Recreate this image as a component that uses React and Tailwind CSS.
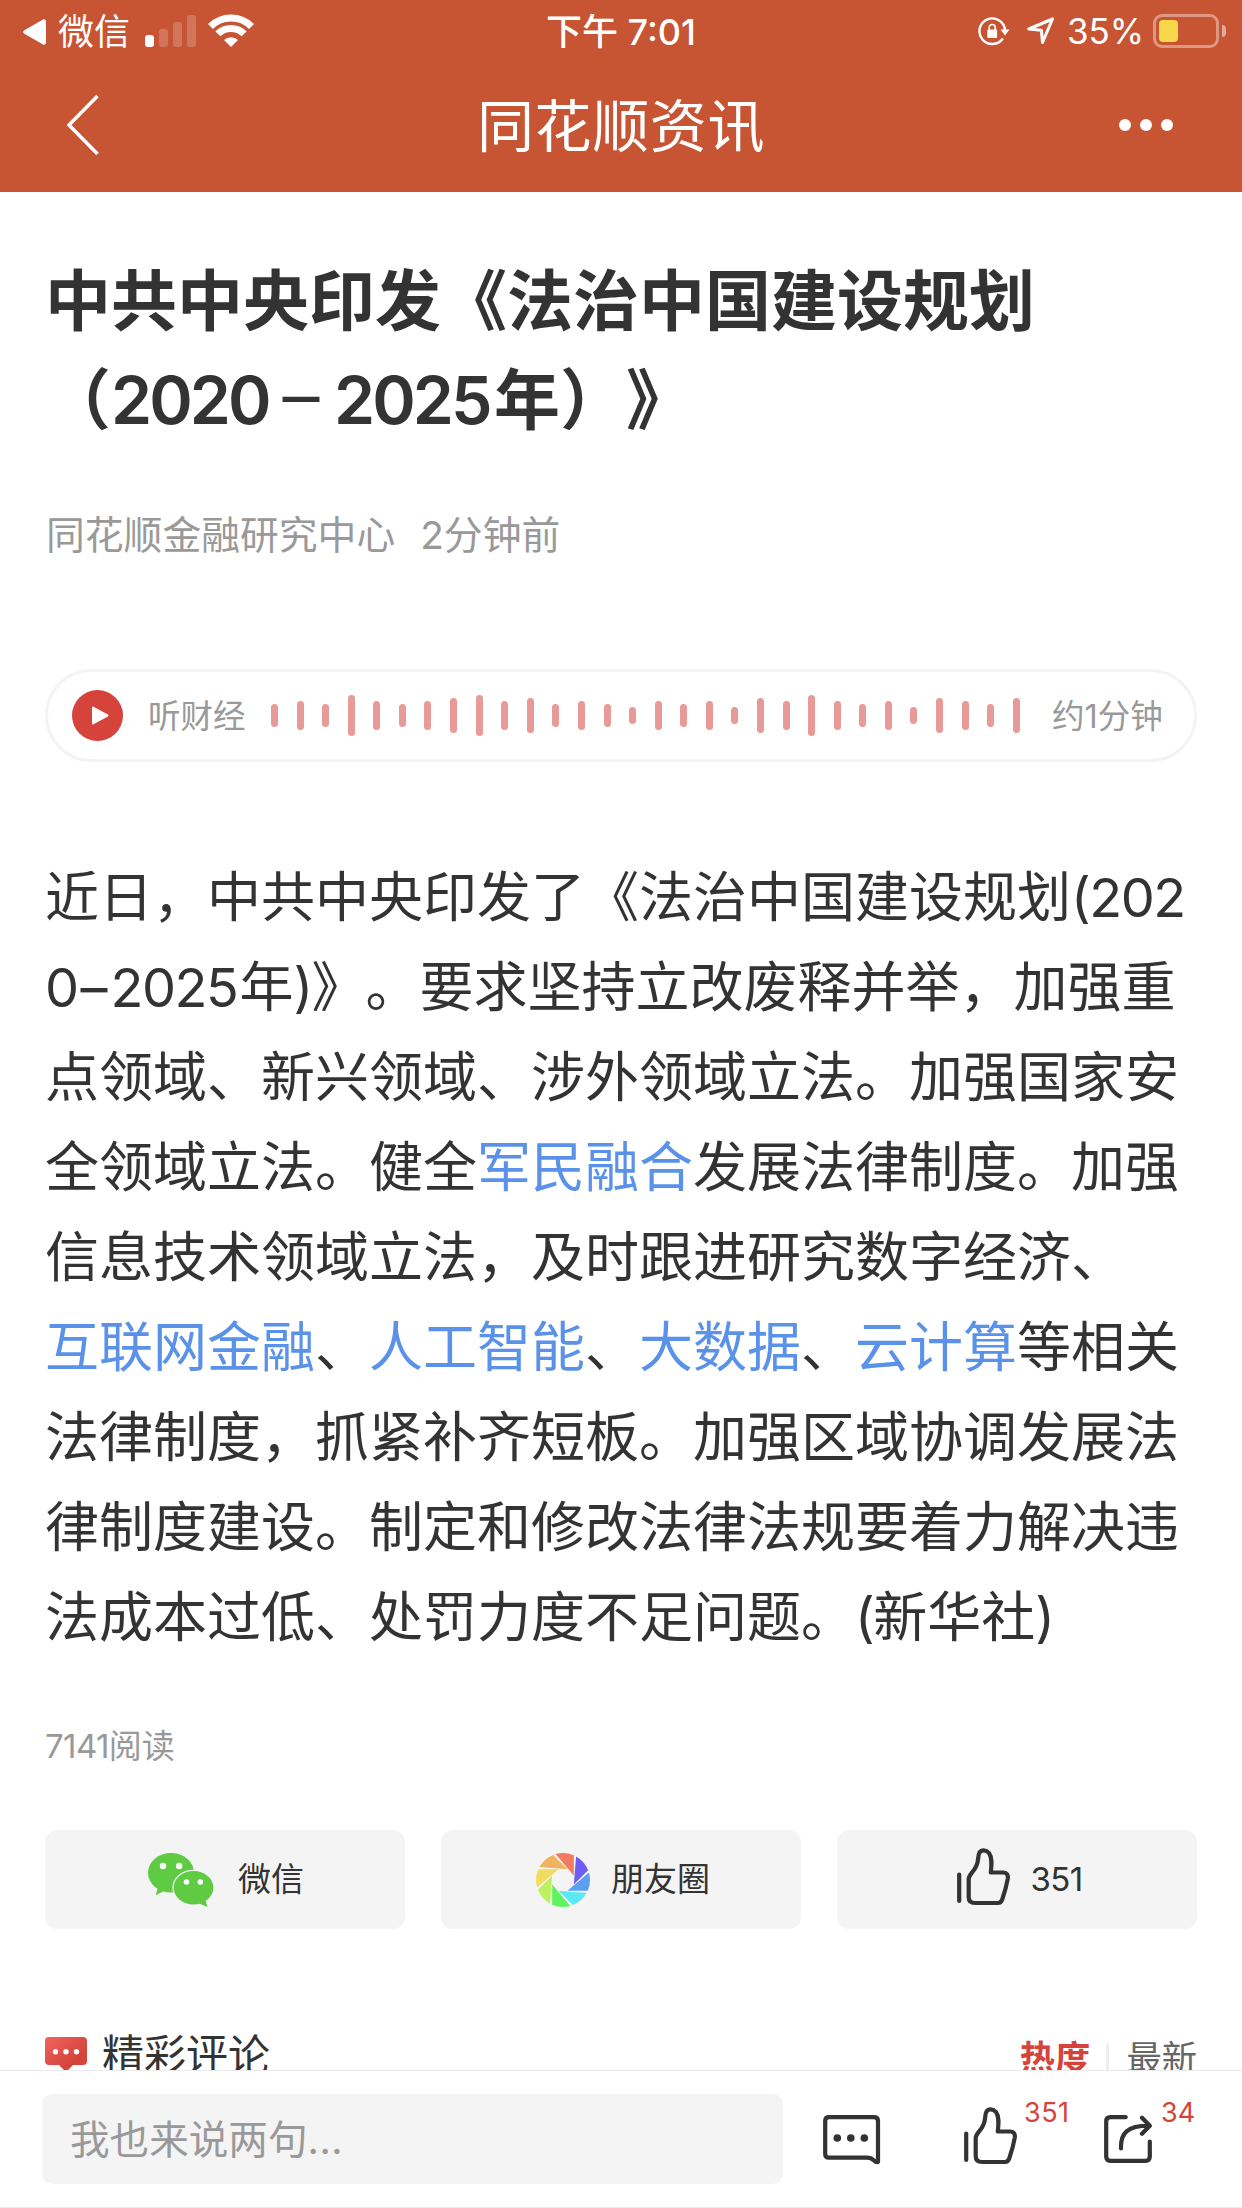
const BARS = [
  23, 29, 23, 41, 29, 23, 29, 35, 41, 29, 35, 23, 29, 23, 17,
  29, 23, 29, 17, 35, 29, 41, 29, 23, 29, 17, 35, 29, 23, 35,
];

const BLADES = [
  "#f27a5e", "#6f5df2", "#5b9ff2", "#5ce8f2",
  "#60f25f", "#bcf25d", "#f0dc5e", "#f0b45e",
];

function StatusBar() {
  return (
    <div className="grid h-[62px] grid-cols-[1fr_auto_1fr] items-center text-[36px] leading-[62px]">
      <div className="flex items-center pl-[23px]">
        <svg className="h-[26px] w-[23px]" viewBox="0 0 23 26" fill="currentColor">
          <path d="M1 11.5 20 .6Q23 -.5 23 3v20q0 3.500-3 2.400L1 14.500Q-.6 13 1 11.500Z" />
        </svg>
        <span className="ml-[12px] pt-px">微信</span>
        <div className="ml-[15px] flex items-end gap-[5px] pb-[2px]">
          <i className="h-[12px] w-[9px] rounded-[3px] bg-white" />
          <i className="h-[18px] w-[9px] rounded-[3px] bg-white/20" />
          <i className="h-[25px] w-[9px] rounded-[3px] bg-white/20" />
          <i className="h-[32px] w-[9px] rounded-[3px] bg-white/20" />
        </div>
        <svg className="-mt-[3px] ml-[12px] h-[33px] w-[46px]" viewBox="0 0 46 33" fill="none" stroke="currentColor">
          <path d="M2.500 12.500A29 29 0 0 1 43.500 12.500" strokeWidth="7" />
          <path d="M9.900 19.900A18.500 18.500 0 0 1 36.100 19.900" strokeWidth="7" />
          <path d="M23 33 16 26A10 10 0 0 1 30 26Z" fill="currentColor" stroke="none" />
        </svg>
      </div>
      <div className="text-[36px] font-medium">下午 7:01</div>
      <div className="flex items-center justify-end pr-[16px] pb-px">
        <svg className="h-[29px] w-[32px]" viewBox="0 0 32 29" fill="none" stroke="currentColor">
          <path d="M27 13A12.800 12.800 0 1 0 24.800 21.500" strokeWidth="2.400" />
          <path d="M22.500 12.500h9L27 18.500Z" fill="currentColor" stroke="none" />
          <rect x="9.300" y="12.500" width="9.800" height="8.500" rx="1" fill="currentColor" stroke="none" />
          <path d="M11.200 13v-2.500a3 3 0 0 1 6 0V13" strokeWidth="1.600" />
        </svg>
        <svg className="ml-[17px] h-[28px] w-[28px]" viewBox="0 0 28 28" fill="none" stroke="currentColor" strokeWidth="3" strokeLinejoin="round">
          <path d="M25.500 2 1.800 12l12.600 1.200L15.500 25.500Z" />
        </svg>
        <span className="ml-[12px] text-[35px] tracking-[-0.100px]">35%</span>
        <div className="ml-[9px] h-[34px] w-[66px] rounded-[9px] border-[3px] border-white/40 p-[3px]">
          <div className="h-full w-[19px] rounded-[4px] bg-[#f8d84a]" />
        </div>
        <i className="ml-[3px] h-[12px] w-[4px] rounded-r-full bg-white/50" />
      </div>
    </div>
  );
}

function NavBar() {
  return (
    <div className="flex h-[130px] items-center justify-between pb-[4px] pl-[67px] pr-[69px]">
      <svg className="h-[60px] w-[56px]" viewBox="0 0 56 60" fill="none" stroke="currentColor" strokeWidth="3.500">
        <path d="M30.500 1 2 30l28.500 29" />
      </svg>
      <h1 className="pt-[3px] text-[57px] leading-[80px] tracking-[0.600px]">同花顺资讯</h1>
      <div className="flex gap-[9px]">
        <i className="size-[12px] rounded-full bg-white" />
        <i className="size-[12px] rounded-full bg-white" />
        <i className="size-[12px] rounded-full bg-white" />
      </div>
    </div>
  );
}

function WechatIcon() {
  return (
    <svg className="h-[54px] w-[66px]" viewBox="0 0 66 54" fill="#5fcb43">
      <ellipse cx="23" cy="19.700" rx="23" ry="19.700" />
      <path d="M10 34 7.700 42.300 17 37.500Z" />
      <ellipse cx="45.500" cy="34.700" rx="21.200" ry="18" fill="#f4f4f4" />
      <ellipse cx="45.500" cy="34.700" rx="19.900" ry="16.700" />
      <path d="M50 50 59.500 54 57 45.500Z" />
      <g fill="#fff">
        <circle cx="15" cy="13" r="3.200" />
        <circle cx="31.200" cy="13" r="3.200" />
        <circle cx="38.500" cy="29" r="2.800" />
        <circle cx="52.300" cy="29" r="2.800" />
      </g>
    </svg>
  );
}

function MomentsIcon() {
  return (
    <svg className="ml-[2px] size-[54px]" viewBox="0 0 54 54">
      {BLADES.map((color, i) => (
        <path
          key={color}
          d="M19.600 1.100A27 27 0 0 1 37.800 2.300V22.500Z"
          fill={color}
          transform={`rotate(${i * 45} 27 27)`}
        />
      ))}
    </svg>
  );
}

function ThumbIcon() {
  return (
    <svg className="h-[58px] w-[53px]" viewBox="0 0 53 58" fill="none" stroke="#333" strokeWidth="4.200" strokeLinecap="round" strokeLinejoin="round">
      <path d="M2.200 26.500V53" />
      <path d="M11.700 31C12 26 17 24 19.500 17.500 22 12 20.500 8 22.500 4.500 24.500 1.500 29 1.500 32 5 35.500 10 34.500 17 33.800 24.500H46.500Q51.500 25 50.800 30.500C49.500 38 47.500 45 45.200 51.500Q44 55 41 55H18Q11.700 55 11.700 49Z" />
    </svg>
  );
}

function ShareButton({ icon, label }) {
  return (
    <button className="flex h-[99px] flex-1 items-center justify-center rounded-[12px] bg-[#f4f4f4] pl-[2px] text-[33px] leading-[48px] text-[#333]">
      {icon}
      {label}
    </button>
  );
}

function Link({ children }) {
  return <span className="text-[#5a92e9]">{children}</span>;
}

function Digits({ children }) {
  return <span className="tracking-[-1.500px]">{children}</span>;
}

export default function App() {
  return (
    <div className="flex h-[2208px] w-[1242px] flex-col overflow-hidden bg-white font-['Inter','Noto_Sans_CJK_SC',sans-serif] text-[#333] [text-spacing-trim:space-all]">
      <header className="h-[192px] shrink-0 bg-[#c75433] text-white">
        <StatusBar />
        <NavBar />
      </header>

      <main className="min-h-0 flex-1 overflow-hidden px-[45px] whitespace-nowrap">
        <h2 className="mt-[60px] text-[66px] leading-[99px] font-semibold">
          <div>中共中央印发《法治中国建设规划</div>
          <div>
            （<span className="inline-block w-[157px] tracking-[-2.900px]">2020</span>
            <span className="inline-block w-[66px] text-center align-[5px] text-[52px] leading-none">－</span>
            <span className="inline-block w-[160px] tracking-[-2.900px]">2025</span>年）》
          </div>
        </h2>

        <div className="mt-[56px] flex gap-[25px] pl-px text-[38.800px] leading-[58px] text-[#999]">
          <span>同花顺金融研究中心</span>
          <span>2分钟前</span>
        </div>

        {/* 语音播报 */}
        <div className="mt-[105px] flex h-[93px] items-center rounded-full border-[3px] border-[#f4f4f4] pl-[24px] text-[32.500px] text-[#999]">
          <div className="flex size-[51px] items-center justify-center rounded-full bg-[#d5433b]">
            <svg className="ml-[5px] h-[19px] w-[17px]" viewBox="0 0 17 19" fill="#fff">
              <path d="M0 1.500Q0 0 1.500.7L16 8.500q1 1 0 2L1.500 18.300Q0 19 0 17.500Z" />
            </svg>
          </div>
          <span className="ml-[25px] w-[98px] pt-[3px]">听财经</span>
          <div className="ml-[25px] flex w-[749px] items-center justify-between">
            {BARS.map((h, i) => (
              <i key={i} className="w-[7px] rounded-full bg-[#e89a97]" style={{ height: h }} />
            ))}
          </div>
          <span className="ml-[32px] pt-[3px]">约1分钟</span>
        </div>

        <article className="mt-[91px] text-[54px] leading-[90px]">
          <p>近日，中共中央印发了《法治中国建设规划<Digits>(202</Digits></p>
          <p>
            <Digits>0</Digits><span className="inline-block w-[33px] text-center">–</span>
            <span className="inline-block w-[129px] tracking-[-1.500px]">2025</span>年
            <span className="inline-block w-[18px]">)</span>》。要求坚持立改废释并举，加强重
          </p>
          <p>点领域、新兴领域、涉外领域立法。加强国家安</p>
          <p>全领域立法。健全<Link>军民融合</Link>发展法律制度。加强</p>
          <p>信息技术领域立法，及时跟进研究数字经济、</p>
          <p><Link>互联网金融</Link>、<Link>人工智能</Link>、<Link>大数据</Link>、<Link>云计算</Link>等相关</p>
          <p>法律制度，抓紧补齐短板。加强区域协调发展法</p>
          <p>律制度建设。制定和修改法律法规要着力解决违</p>
          <p>法成本过低、处罚力度不足问题。<Digits>(</Digits>新华社<Digits>)</Digits></p>
        </article>

        <div className="mt-[59px] text-[33px] leading-[48px] text-[#999]"><span className="tracking-[-0.600px]">7141</span>阅读</div>

        <div className="mt-[60px] flex gap-[36px]">
          <ShareButton icon={<WechatIcon />} label={<span className="ml-[24px] pb-[2px]">微信</span>} />
          <ShareButton icon={<MomentsIcon />} label={<span className="ml-[21px] pb-[2px]">朋友圈</span>} />
          <ShareButton icon={<div className="-mt-[5px] ml-[4px]"><ThumbIcon /></div>} label={<span className="ml-[20px] pb-[2px] tracking-[-0.600px]">351</span>} />
        </div>

        {/* 评论标题，下半部分被底部栏遮住 */}
        <div className="mt-[96px] flex h-[60px] items-center">
          <svg className="h-[36px] w-[42px]" viewBox="0 0 42 36">
            <defs>
              <linearGradient id="bubble" x1="0" y1="0" x2="1" y2="1">
                <stop offset="0" stopColor="#f0645f" />
                <stop offset=".7" stopColor="#d5433b" />
              </linearGradient>
            </defs>
            <path d="M4 0h34q4 0 4 4v20q0 4-4 4h-10l-5 5q-2 1.500-4 0l-5-5H4q-4 0-4-4V4q0-4 4-4Z" fill="url(#bubble)" />
            <g fill="#fff">
              <circle cx="10.500" cy="14.700" r="2.700" />
              <circle cx="21" cy="14.700" r="2.700" />
              <circle cx="31.500" cy="14.700" r="2.700" />
            </g>
          </svg>
          <span className="ml-[15px] text-[42px] leading-[60px]">精彩评论</span>
          <div className="ml-auto flex items-center pt-[7px] text-[35.300px] leading-[54px]">
            <span className="font-bold text-[#d5433b]">热度</span>
            <i className="mr-[17px] ml-[16px] h-[32px] w-[3px] bg-[#eee]" />
            <span className="text-[#666]">最新</span>
          </div>
        </div>
      </main>

      <footer className="flex h-[138px] shrink-0 border-y border-[#ebebeb] pt-[23px] pl-[42px]">
        <div className="h-[90px] w-[741px] rounded-[10px] bg-[#f4f4f4] pt-px pl-[28px] text-[39.600px] leading-[90px] text-[#999]">
          我也来说两句<span className="tracking-[0.500px]">...</span>
        </div>
        <svg className="mt-[21px] ml-[40px] h-[50px] w-[58px]" viewBox="0 0 58 50" fill="none" stroke="#333" strokeWidth="4.200" strokeLinejoin="round">
          <path d="M6 2.200H51Q55 2.200 55 6V47Q53 47.500 51 45.500 48 42.700 44 42.700H6Q2.200 42.700 2.200 39V6Q2.200 2.200 6 2.200Z" />
          <g fill="#333" stroke="none">
            <circle cx="14.300" cy="23" r="3.800" />
            <circle cx="27.800" cy="23" r="3.800" />
            <circle cx="41.300" cy="23" r="3.800" />
          </g>
        </svg>
        <div className="mt-[13px] ml-[83px]"><ThumbIcon /></div>
        <span className="mt-[3px] ml-[7px] w-[47px] text-[27px] leading-[32px] tracking-[0.500px] text-[#d5433b]">351</span>
        <svg className="mt-[21px] ml-[33px] h-[49px] w-[49px]" viewBox="0 0 49 49" fill="none" stroke="#333" strokeWidth="4.200" strokeLinecap="round" strokeLinejoin="round">
          <path d="M21.700 2.200H6.500Q2.200 2.200 2.200 6.500V41.500Q2.200 45.800 6.500 45.800H41.500Q45.800 45.800 45.800 41.500V26.500" />
          <path d="M17 33.500C16.500 18 23 10.800 45 10.700M38 2.800l7.800 7.900L38 18.800" />
        </svg>
        <span className="mt-[3px] ml-[8px] text-[27px] leading-[32px] text-[#d5433b]">34</span>
      </footer>
    </div>
  );
}
